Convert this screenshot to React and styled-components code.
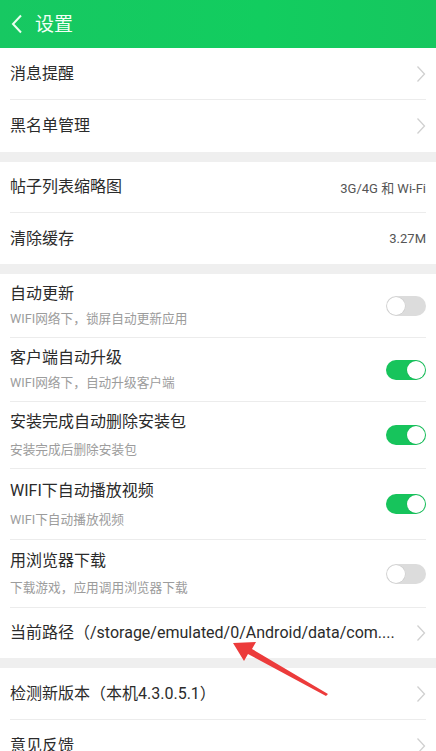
import React from 'react';
import styled, { createGlobalStyle } from 'styled-components';

const Global = createGlobalStyle`
  html, body { margin: 0; padding: 0; background: #efefef; }
  body { font-family: Roboto, "Noto Sans CJK SC", sans-serif; }
`;

const Page = styled.div`
  position: relative;
  width: 436px;
  height: 751px;
  overflow: hidden;
  background: #efefef;
`;

const Header = styled.div`
  height: 48px;
  background: linear-gradient(90deg, #17c862 0%, #12cd5f 60%, #16c75f 100%);
  display: flex;
  align-items: center;
  padding-left: 11px;
  gap: 12px;
  color: #fff;
`;

const Title = styled.span`
  font-size: 19px;
  line-height: 1;
  color: #f4fff6;
`;

const Group = styled.div`
  background: #fff;
  margin-bottom: ${p => (p.$last ? 0 : 10)}px;
`;

const Row = styled.div`
  height: ${p => p.$h}px;
  margin: 0 10px;
  display: flex;
  align-items: center;
  justify-content: space-between;
  border-bottom: ${p => (p.$noline ? 'none' : '1px solid #ececec')};
  box-sizing: border-box;
`;

const Texts = styled.div`
  display: flex;
  flex-direction: column;
  gap: ${p => p.$gap || 6}px;
  min-width: 0;
`;

const Label = styled.div`
  font-size: 16px;
  color: #2b2b2b;
  line-height: 20px;
  white-space: nowrap;
`;

const Sub = styled.div`
  font-size: 12.7px;
  color: #9c9c9c;
  line-height: 16px;
  white-space: nowrap;
`;

const Value = styled.span`
  font-size: 13px;
  color: #555;
`;

const Track = styled.div`
  width: 40px;
  height: 20px;
  border-radius: 10px;
  background: ${p => (p.$on ? '#17c45c' : '#dcdcdc')};
  position: relative;
  flex-shrink: 0;
`;

const Knob = styled.div`
  position: absolute;
  top: 1px;
  left: ${p => (p.$on ? 21 : 1)}px;
  width: 18px;
  height: 18px;
  border-radius: 50%;
  background: #fff;
  box-shadow: 0 0 0 0.5px rgba(0, 0, 0, 0.08);
`;

const Overlay = styled.svg`
  position: absolute;
  left: 0;
  top: 0;
  pointer-events: none;
`;

const Chevron = () => (
  <svg width="10" height="18" viewBox="0 0 10 18" style={{ flexShrink: 0 }}>
    <path d="M1.5 1.5 L8.5 9 L1.5 16.5" fill="none" stroke="#d0d0d0" strokeWidth="1.3" />
  </svg>
);

const Back = () => (
  <svg width="12" height="20" viewBox="0 0 12 20">
    <path d="M10 1.5 L2 10 L10 18.5" fill="none" stroke="#eafff0" strokeWidth="2" />
  </svg>
);

const Switch = ({ on }) => (
  <Track $on={on}>
    <Knob $on={on} />
  </Track>
);

const NavRow = ({ label, h = 51, noline }) => (
  <Row $h={h} $noline={noline}>
    <Label>{label}</Label>
    <Chevron />
  </Row>
);

const ToggleRow = ({ label, sub, on, h, gap, noline }) => (
  <Row $h={h} $noline={noline}>
    <Texts $gap={gap}>
      <Label>{label}</Label>
      <Sub>{sub}</Sub>
    </Texts>
    <Switch on={on} />
  </Row>
);

export default function App() {
  return (
    <Page>
      <Global />
      <Header>
        <Back />
        <Title>设置</Title>
      </Header>

      <Group>
        <NavRow label="消息提醒" h={52} />
        <NavRow label="黑名单管理" h={52} noline />
      </Group>

      <Group>
        <Row $h={51}>
          <Label>帖子列表缩略图</Label>
          <Value>3G/4G 和 Wi-Fi</Value>
        </Row>
        <Row $h={51} $noline>
          <Label>清除缓存</Label>
          <Value>3.27M</Value>
        </Row>
      </Group>

      <Group>
        <ToggleRow label="自动更新" sub="WIFI网络下，锁屏自动更新应用" h={64} gap={7} />
        <ToggleRow label="客户端自动升级" sub="WIFI网络下，自动升级客户端" on h={64} gap={7} />
        <ToggleRow label="安装完成自动删除安装包" sub="安装完成后删除安装包" on h={67} gap={10} />
        <ToggleRow label="WIFI下自动播放视频" sub="WIFI下自动播放视频" on h={71} gap={11} />
        <ToggleRow label="用浏览器下载" sub="下载游戏，应用调用浏览器下载" h={68} gap={9} />
        <NavRow label="当前路径（/storage/emulated/0/Android/data/com...." h={50} noline />
      </Group>

      <Group $last>
        <NavRow label="检测新版本（本机4.3.0.5.1）" h={52} />
        <NavRow label="意见反馈" h={52} noline />
      </Group>

      <Overlay width="436" height="751" viewBox="0 0 436 751">
        <path
          d="M233 643 L256 642 L252 649 L328 694 L326 696 L248 654 L244 661 Z"
          fill="#ec3b3b"
        />
      </Overlay>
    </Page>
  );
}
